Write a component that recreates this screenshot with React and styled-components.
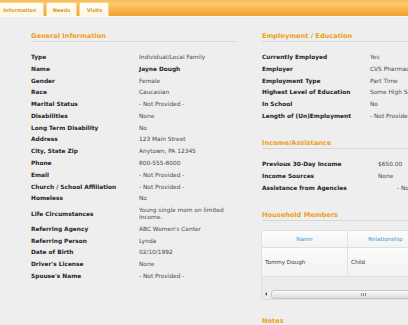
import styled, { createGlobalStyle } from 'styled-components'

const Global = createGlobalStyle`
  html, body {
    margin: 0;
    padding: 0;
    background: #eeeeee;
  }
  body {
    font-family: "DejaVu Sans", Verdana, sans-serif;
  }
`

const Page = styled.div`
  width: 408px;
  height: 325px;
  overflow: hidden;
  background: #eeeeee;
`

const TabBar = styled.div`
  height: 16px;
  display: flex;
  align-items: flex-end;
  gap: 2px;
  background: linear-gradient(180deg, #f9bd58 0%, #fbc86c 25%, #f6b244 65%, #f1a430 100%);
  border-bottom: 1px solid #f7f7f7;
`

const Tab = styled.div`
  height: 14px;
  line-height: 14px;
  padding: 0 6.2px;
  margin-left: ${({ $first }) => ($first ? '-4px' : '0')};
  box-sizing: border-box;
  background: linear-gradient(180deg, #fffdf6, #fff6e2);
  border: 1px solid #f6d38e;
  border-bottom: none;
  border-radius: 2px 2px 0 0;
  font-size: 5px;
  font-weight: bold;
  color: #dc9a38;
  white-space: nowrap;
`

const Content = styled.div`
  width: 560px;
  display: grid;
  grid-template-columns: 205px 1fr;
  column-gap: 26px;
  padding: 15px 0 0 31px;
`

const Column = styled.div`
  display: flex;
  flex-direction: column;
`

const Section = styled.div`
  margin-top: ${({ $first }) => ($first ? '0' : '16.8px')};
`

const Heading = styled.div`
  font-size: 6.6px;
  line-height: 9px;
  font-weight: bold;
  color: #ef9f22;
  border-bottom: 1px solid #d7d7d7;
  margin-bottom: 9.6px;
  white-space: nowrap;
`

const Row = styled.div`
  display: grid;
  grid-template-columns: ${({ $labelWidth }) => $labelWidth || 108}px 1fr;
  padding: 2.4px 0;
  line-height: 7px;
  font-size: 5.85px;
`

const Label = styled.div`
  font-weight: bold;
  color: #1e1e1e;
  white-space: nowrap;
  align-self: center;
`

const Value = styled.div`
  color: #4a4a4a;
  font-weight: ${({ $bold }) => ($bold ? 'bold' : 'normal')};
  ${({ $bold }) => $bold && 'color: #1e1e1e;'}
  white-space: ${({ $wrap }) => ($wrap ? 'normal' : 'nowrap')};
`

const GridBox = styled.div`
  margin-left: -1px;
  width: 200px;
  border: 1px solid #e0e0e0;
  border-right: none;
  background: #ececec;
`

const GridRow = styled.div`
  display: grid;
  grid-template-columns: 86px 76px 1fr;
`

const HeadCell = styled.div`
  height: 17px;
  line-height: 17px;
  text-align: center;
  font-size: 5.6px;
  color: #3b9bd4;
  background: linear-gradient(180deg, #fcfcfc, #f3f3f3);
  border-right: 1px solid #e2e2e2;
  border-bottom: 1px solid #e0e0e0;
  box-sizing: border-box;
`

const Cell = styled.div`
  height: 29px;
  line-height: 29px;
  padding-left: 3px;
  font-size: 5.6px;
  color: #333;
  background: linear-gradient(180deg, #fbfbfb, #f2f2f2);
  border-right: 1px solid #e2e2e2;
  border-bottom: 1px solid #e0e0e0;
  box-sizing: border-box;
`

const Filler = styled.div`
  height: 12px;
  background: #ebebeb;
`

const Scrollbar = styled.div`
  height: 10px;
  display: flex;
  align-items: center;
  gap: 2px;
  padding-left: 1px;
  background: #ebebeb;
`

const ScrollArrow = styled.div`
  width: 6px;
  height: 8px;
  display: flex;
  align-items: center;
  justify-content: center;
  &::before {
    content: '';
    border-top: 2px solid transparent;
    border-bottom: 2px solid transparent;
    border-right: 2px solid #555;
  }
`

const Thumb = styled.div`
  flex: none;
  width: 182px;
  height: 7px;
  border: 1px solid #c6c6c6;
  border-radius: 3px;
  background: linear-gradient(180deg, #fafafa, #dcdcdc);
  display: flex;
  align-items: center;
  justify-content: center;
  gap: 1px;
`

const Grip = styled.span`
  width: 1px;
  height: 3px;
  background: #8a8a8a;
`

const general = [
  ['Type', 'Individual/Local Family'],
  ['Name', 'Jayne Dough', true],
  ['Gender', 'Female'],
  ['Race', 'Caucasian'],
  ['Marital Status', '- Not Provided -'],
  ['Disabilities', 'None'],
  ['Long Term Disability', 'No'],
  ['Address', '123 Main Street'],
  ['City, State Zip', 'Anytown, PA 12345'],
  ['Phone', '800-555-8000'],
  ['Email', '- Not Provided -'],
  ['Church / School Affiliation', '- Not Provided -'],
  ['Homeless', 'No'],
  ['Life Circumstances', 'Young single mom on limited income.'],
  ['Referring Agency', "ABC Women's Center"],
  ['Referring Person', 'Lynda'],
  ['Date of Birth', '02/10/1992'],
  ["Driver's License", 'None'],
  ["Spouse's Name", '- Not Provided -'],
]

const employment = [
  ['Currently Employed', 'Yes'],
  ['Employer', 'CVS Pharmacy'],
  ['Employment Type', 'Part Time'],
  ['Highest Level of Education', 'Some High School'],
  ['In School', 'No'],
  ['Length of (Un)Employment', '- Not Provided -'],
]

const income = [
  ['Previous 30-Day Income', '$650.00', 116],
  ['Income Sources', 'None', 116],
  ['Assistance from Agencies', '- Not Provided -', 135],
]

export default function App() {
  return (
    <Page>
      <Global />
      <TabBar>
        <Tab $first>Information</Tab>
        <Tab>Needs</Tab>
        <Tab>Visits</Tab>
      </TabBar>
      <Content>
        <Column>
          <Section $first>
            <Heading>General Information</Heading>
            {general.map(([label, value, bold]) => (
              <Row key={label}>
                <Label>{label}</Label>
                <Value $bold={bold} $wrap>{value}</Value>
              </Row>
            ))}
          </Section>
        </Column>
        <Column>
          <Section $first>
            <Heading>Employment / Education</Heading>
            {employment.map(([label, value]) => (
              <Row key={label}>
                <Label>{label}</Label>
                <Value>{value}</Value>
              </Row>
            ))}
          </Section>
          <Section>
            <Heading>Income/Assistance</Heading>
            {income.map(([label, value, w]) => (
              <Row key={label} $labelWidth={w}>
                <Label>{label}</Label>
                <Value>{value}</Value>
              </Row>
            ))}
          </Section>
          <Section>
            <Heading>Household Members</Heading>
            <GridBox>
              <GridRow>
                <HeadCell>Name</HeadCell>
                <HeadCell>Relationship</HeadCell>
                <HeadCell />
              </GridRow>
              <GridRow>
                <Cell>Tommy Dough</Cell>
                <Cell>Child</Cell>
                <Cell />
              </GridRow>
              <Filler />
              <Scrollbar>
                <ScrollArrow />
                <Thumb>
                  <Grip />
                  <Grip />
                  <Grip />
                </Thumb>
              </Scrollbar>
            </GridBox>
          </Section>
          <Section>
            <Heading>Notes</Heading>
          </Section>
        </Column>
      </Content>
    </Page>
  )
}
